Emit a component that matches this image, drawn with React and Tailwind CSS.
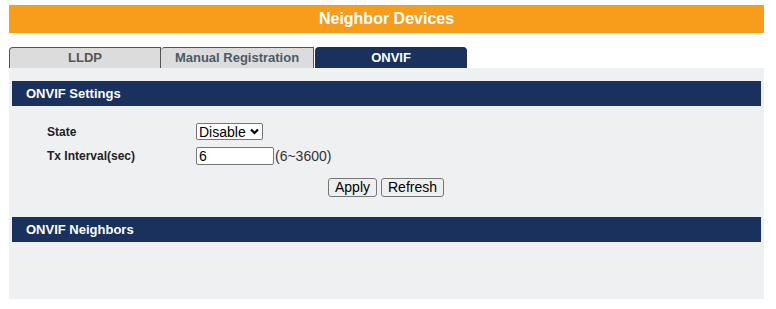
import React from "react";

export default function App() {
  const font = { fontFamily: '"Liberation Sans", Arial, sans-serif' };
  return (
    <div className="bg-white w-[776px] h-[309px] pt-[5px] pl-[9px]" style={font}>
      <div className="w-[755px] h-[28px] bg-[#f89c1c] flex items-center justify-center text-white font-bold text-[16px]">
        Neighbor Devices
      </div>
      <div className="flex mt-[14px] h-[21px]">
        <div className="w-[152px] h-[21px] border border-b-0 border-[#555] rounded-tl-[4px] bg-[#dcdcdc] flex items-center justify-center text-[13px] font-bold text-[#555]">
          LLDP
        </div>
        <div className="w-[153px] h-[21px] border border-b-0 border-l-0 border-[#555] rounded-tl-[4px] bg-[#dcdcdc] flex items-center justify-center text-[13px] font-bold text-[#4b5a68]">
          Manual Registration
        </div>
        <div className="ml-[1px] w-[152px] h-[21px] rounded-t-[4px] bg-[#1a315e] flex items-center justify-center text-[13px] font-bold text-white">
          ONVIF
        </div>
      </div>
      <div className="w-[755px] h-[231px] bg-[#eef0f2] pt-[13px] px-[3px]">
        <div className="h-[25px] bg-[#1a315e] flex items-center pl-[14px] text-white font-bold text-[13px]">
          ONVIF Settings
        </div>
        <div className="pl-[35px] pt-[17px] flex flex-col gap-[7px]">
          <div className="flex items-center h-[17px]">
            <div className="w-[149px] text-[12px] font-bold text-[#222]">State</div>
            <div className="relative w-[67px] h-[17px]">
              <select
                className="appearance-none block w-[67px] h-[17px] py-0 border border-[#767676] rounded-[2px] bg-white text-[14px] leading-[14px] pl-[2px] text-black"
                defaultValue="Disable"
              >
                <option>Disable</option>
                <option>Enable</option>
              </select>
              <svg className="pointer-events-none absolute right-[4px] top-[5px]" width="9" height="7" viewBox="0 0 9 7">
                <path d="M1 1.5 L4.5 5 L8 1.5" fill="none" stroke="#000" strokeWidth="2.2" />
              </svg>
            </div>
          </div>
          <div className="flex items-center h-[18px]">
            <div className="w-[149px] text-[12px] font-bold text-[#222]">Tx Interval(sec)</div>
            <input
              className="block w-[78px] h-[18px] border border-[#767676] rounded-[2px] bg-white text-[14px] pl-[2px] text-black"
              defaultValue="6"
            />
            <span className="text-[14px] text-[#333] ml-[1px]">(6~3600)</span>
          </div>
        </div>
        <div className="flex justify-center gap-[4px] mt-[13px] pr-[1px]">
          <button className="w-[49px] h-[19px] border border-[#767676] rounded-[3px] bg-[#efefef] text-[14px] leading-[17px] text-black">
            Apply
          </button>
          <button className="w-[63px] h-[19px] border border-[#767676] rounded-[3px] bg-[#efefef] text-[14px] leading-[17px] text-black">
            Refresh
          </button>
        </div>
        <div className="mt-[20px] h-[25px] bg-[#1a315e] flex items-center pl-[14px] text-white font-bold text-[13px]">
          ONVIF Neighbors
        </div>
      </div>
    </div>
  );
}
